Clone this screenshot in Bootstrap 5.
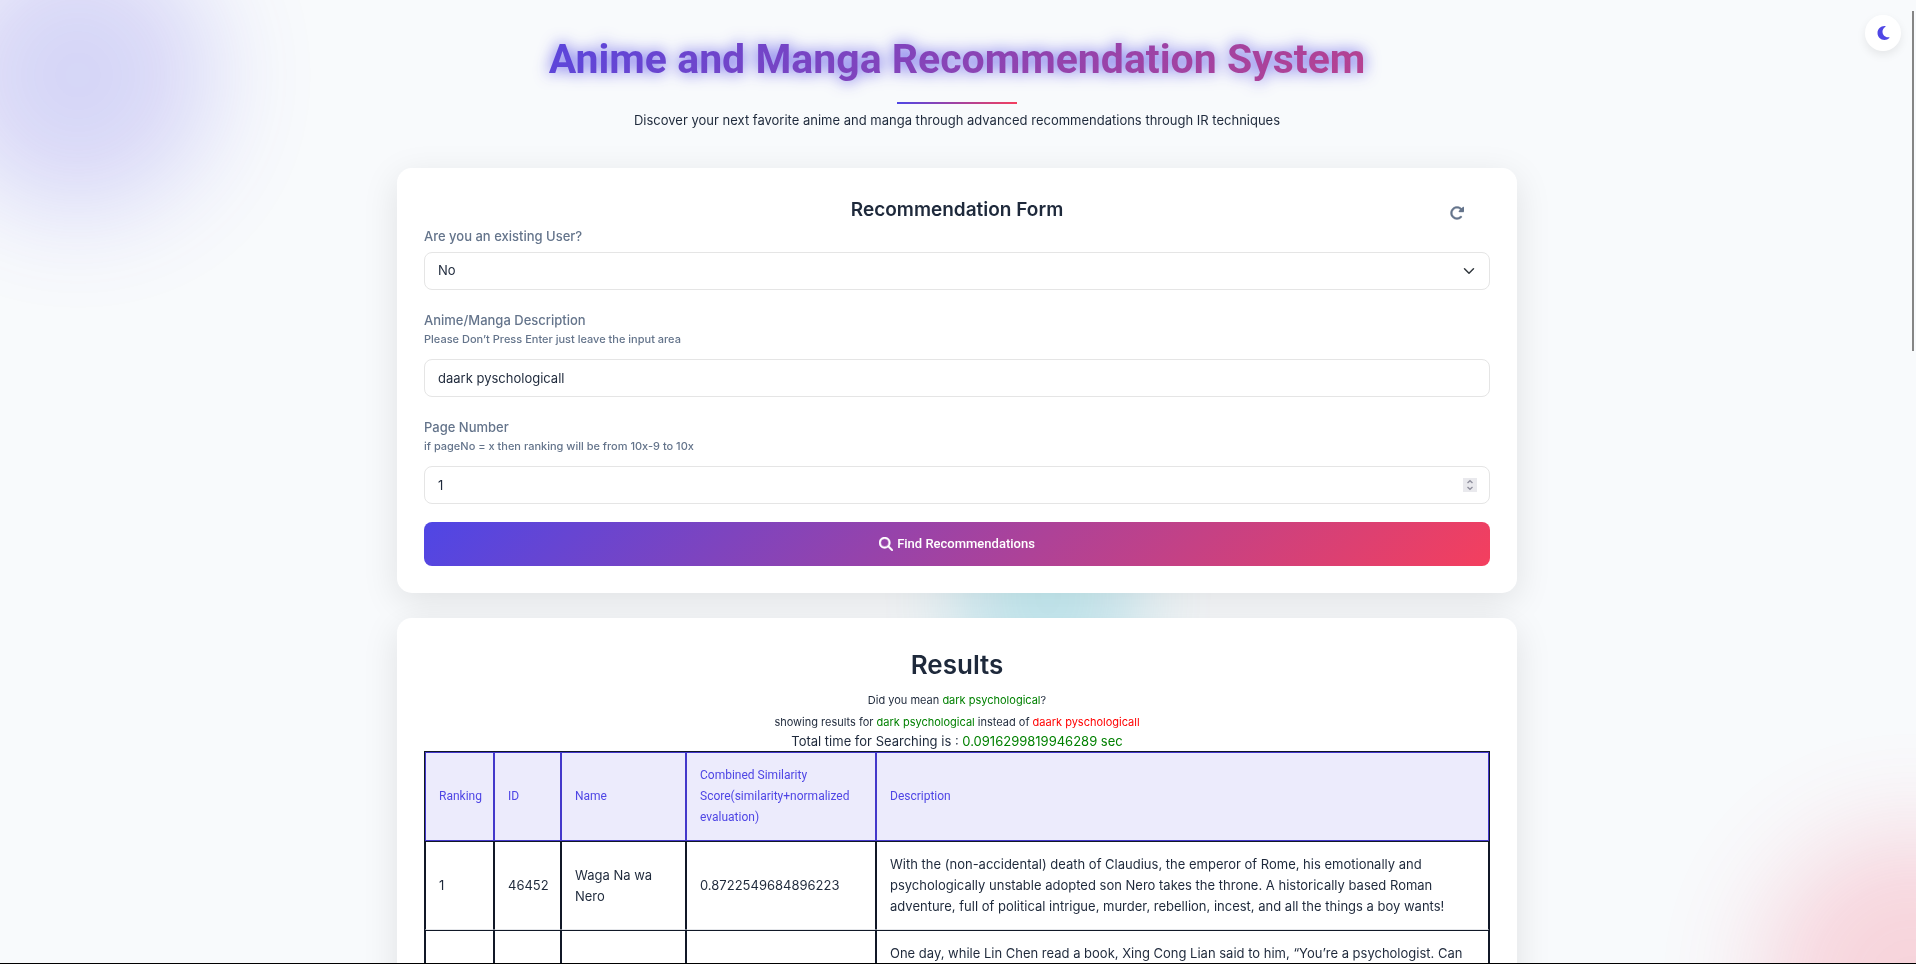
<!DOCTYPE html>
<html lang="en">
<head>
<meta charset="utf-8">
<meta name="viewport" content="width=device-width, initial-scale=1">
<title>Anime and Manga Recommendation System</title>
<link rel="stylesheet" href="https://cdn.jsdelivr.net/npm/bootstrap@5.3.0/dist/css/bootstrap.min.css">
<style>
:root { --primary: #4f46e5; --accent: #f43f5e; --ink: #1e293b; --muted: #64748b; --heading: Roboto, "Liberation Sans", sans-serif; }
html { scrollbar-width: none; }
html::-webkit-scrollbar { display: none; }
body { background: #f8fafc; color: var(--ink); font: 13px/20px Inter, "Liberation Sans", sans-serif; padding-right: 2px; overflow-x: hidden; }
.blob { position: fixed; border-radius: 50%; z-index: -1; opacity: .2; filter: blur(54px); }
.blob-violet { width: 270px; height: 270px; left: -57px; top: -60px; background: var(--primary); }
.blob-cyan { width: 180px; height: 225px; left: 50%; top: 50%; background: #06b6d4; opacity: .2; filter: blur(40px); }
.blob-rose { width: 300px; height: 300px; right: -146px; bottom: -168px; background: var(--accent); }
.page { max-width: 1120px; }
.page-head { padding-top: 35px; margin-bottom: 38px; }
.page-head h1 { font: 700 41px/48px var(--heading); margin-bottom: 19px; color: transparent; background: linear-gradient(135deg, var(--primary) 4%, var(--accent) 136%); -webkit-background-clip: text; background-clip: text; filter: drop-shadow(0 0 8px rgba(79,70,229,.9)); }
.rule { width: 120px; height: 2px; margin-bottom: 6px; background: linear-gradient(90deg, var(--primary), var(--accent)); }
.panel { background: #fff; border-radius: 15px; padding: 27px; margin-bottom: 25px; box-shadow: 0 9px 36px rgba(0,0,0,.1); }
.panel h3 { font-size: 19px; line-height: 30px; font-weight: 600; margin-bottom: 1px; }
.panel h2 { font-size: 26px; line-height: 40px; font-weight: 600; margin-bottom: 5px; }
.field { margin-bottom: 20px; }
.form-label { color: var(--muted); font-weight: 500; margin-bottom: 6px; display: block; }
.has-hint .form-label { margin-bottom: 11px; }
.hint { display: block; font-size: 11px; line-height: 18px; }
.form-control, .form-select { height: 38px; font-size: 13px; color: var(--ink); background-color: #fff; border: 1px solid #e5e5e5; border-radius: 8px; padding: 8px 13px; }
input[type=number] { appearance: textfield; -moz-appearance: textfield; }
input[type=number]::-webkit-inner-spin-button { display: none; }
.stepper { position: absolute; right: 13px; top: 12px; width: 14px; height: 14px; background: #e9e9ed; }
.reset { position: absolute; right: 20px; top: 5px; border: 0; background: none; color: var(--muted); padding: 6px; line-height: 14px; }
.reset svg, .search svg { display: block; fill: currentColor; }
.btn.search { height: 44px; color: #fff; border: 0; border-radius: 8px; font: 500 13px/20px var(--heading); background: linear-gradient(135deg, var(--primary), var(--accent)); margin-top: 18px; gap: 4px; }
.theme { position: fixed; z-index: 2; right: 15px; top: 15px; width: 36px; height: 36px; border: 0; border-radius: 50%; background: #fff; box-shadow: 0 4px 10px rgba(0,0,0,.08); }
.thumb { position: fixed; right: 2px; top: 11px; width: 2px; height: 340px; background: #858585; z-index: 2; }
.baseline { position: fixed; left: 0; right: 0; bottom: 0; height: 1px; background: #000; z-index: 3; }
.note { font-size: 11px; line-height: 20px; margin-bottom: 2px; }
.timing { line-height: 19px; }
.good { color: #008000; } .bad { color: #f00; }
.results { width: 100%; table-layout: fixed; border-collapse: separate; border-spacing: 0; border: 1px solid #111827; line-height: 21px; }
.results th, .results td { padding: 12px 12px 12px 13px; vertical-align: middle; }
.results th { border: 1px solid #4338ca; background: #ecebfc; color: var(--primary); font: 400 12px/21px var(--heading); }
.results td { border: 1px solid #111827; border-bottom-color: #e5e7eb; }
.c-rank { width: 69px; } .c-id { width: 67px; } .c-name { width: 125px; } .c-score { width: 190px; }
</style>
</head>
<body>
<div class="blob blob-violet"></div>
<div class="blob blob-cyan"></div>
<div class="blob blob-rose"></div>

<button class="theme d-flex align-items-center justify-content-center p-0" type="button" aria-label="Toggle dark mode">
  <svg width="13" height="16" viewBox="0 0 384 512" fill="#4f46e5"><path d="M223.5 32C100 32 0 132.3 0 256S100 480 223.5 480c60.6 0 115.5-24.2 155.8-63.4c5-4.9 6.3-12.5 3.1-18.7s-10.1-9.7-17-8.5c-9.8 1.7-19.8 2.6-30.1 2.6c-96.9 0-175.5-78.8-175.5-176c0-65.8 36-123.1 89.3-153.3c6.1-3.5 9.2-10.5 7.7-17.3s-7.3-11.9-14.3-12.5c-6.3-.5-12.6-.8-19-.8z"/></svg>
</button>
<div class="thumb"></div>
<div class="baseline"></div>

<main class="page mx-auto">
  <header class="page-head text-center">
    <h1>Anime and Manga Recommendation System</h1>
    <div class="rule mx-auto"></div>
    <p class="mb-0">Discover your next favorite anime and manga through advanced recommendations through IR techniques</p>
  </header>

  <section class="panel">
    <form class="position-relative">
      <h3 class="text-center">Recommendation Form</h3>
      <button class="reset" type="reset" aria-label="Reset form"><svg width="14" height="14" viewBox="16 16 480 480" stroke="currentColor" stroke-width="12"><path d="M463.5 224H472c13.3 0 24-10.7 24-24V72c0-9.7-5.8-18.5-14.8-22.2s-19.3-1.7-26.2 5.2L413.4 96.6c-87.6-86.5-228.7-86.2-315.8 1c-87.5 87.5-87.5 229.3 0 316.8s229.3 87.5 316.8 0c12.5-12.5 12.5-32.8 0-45.3s-32.8-12.5-45.3 0c-62.5 62.5-163.8 62.5-226.3 0s-62.5-163.8 0-226.3c62.2-62.2 162.7-62.5 225.3-1L327 183c-6.9 6.9-8.9 17.2-5.2 26.2s12.5 14.8 22.2 14.8H463.5z"/></svg></button>
      <div class="field">
        <label class="form-label" for="existing">Are you an existing User?</label>
        <select class="form-select" id="existing"><option>No</option><option>Yes</option></select>
      </div>
      <div class="field has-hint">
        <label class="form-label" for="description">Anime/Manga Description <span class="hint">Please Don’t Press Enter just leave the input area</span></label>
        <input class="form-control" id="description" type="text" value="daark pyschologicall">
      </div>
      <div class="has-hint">
        <label class="form-label" for="pageno">Page Number <span class="hint">if pageNo = x then ranking will be from 10x-9 to 10x</span></label>
        <div class="position-relative">
          <input class="form-control" id="pageno" type="number" min="1" value="1">
          <svg class="stepper" viewBox="0 0 14 14" fill="none" stroke="#8f8f9d" stroke-width="1.4"><path d="M4.5 5 7 2.8 9.500 5M4.500 9 7 11.200 9.500 9"/></svg>
        </div>
      </div>
      <button class="btn search w-100 d-flex align-items-center justify-content-center" type="button">
        <svg width="14" height="14" viewBox="0 0 512 512" stroke="currentColor" stroke-width="16"><path d="M416 208c0 45.900-14.900 88.300-40 122.700L502.600 457.400c12.500 12.500 12.500 32.800 0 45.300s-32.800 12.500-45.300 0L330.700 376c-34.400 25.200-76.800 40-122.700 40C93.100 416 0 322.900 0 208S93.100 0 208 0S416 93.100 416 208zM208 352a144 144 0 1 0 0-288 144 144 0 1 0 0 288z"/></svg>
        Find Recommendations
      </button>
    </form>
  </section>

  <section class="panel">
    <div class="text-center">
      <h2>Results</h2>
      <p class="note">Did you mean <span class="good">dark psychological</span>?</p>
      <p class="note mb-0">showing results for <span class="good">dark psychological</span> instead of <span class="bad">daark pyschologicall</span></p>
      <p class="timing mb-0">Total time for Searching is : <span class="good">0.0916299819946289 sec</span></p>
    </div>
    <table class="results">
      <colgroup><col class="c-rank"><col class="c-id"><col class="c-name"><col class="c-score"><col></colgroup>
      <thead>
        <tr><th>Ranking</th><th>ID</th><th>Name</th><th>Combined Similarity Score(similarity+normalized evaluation)</th><th>Description</th></tr>
      </thead>
      <tbody>
        <tr><td>1</td><td>46452</td><td>Waga Na wa Nero</td><td>0.8722549684896223</td><td>With the (non-accidental) death of Claudius, the emperor of Rome, his emotionally and psychologically unstable adopted son Nero takes the throne. A historically based Roman adventure, full of political intrigue, murder, rebellion, incest, and all the things a boy wants!</td></tr>
        <tr><td></td><td></td><td></td><td></td><td>One day, while Lin Chen read a book, Xing Cong Lian said to him, “You’re a psychologist. Can</td></tr>
      </tbody>
    </table>
  </section>
</main>
<script src="https://cdn.jsdelivr.net/npm/bootstrap@5.3.0/dist/js/bootstrap.bundle.min.js"></script>
</body>
</html>
